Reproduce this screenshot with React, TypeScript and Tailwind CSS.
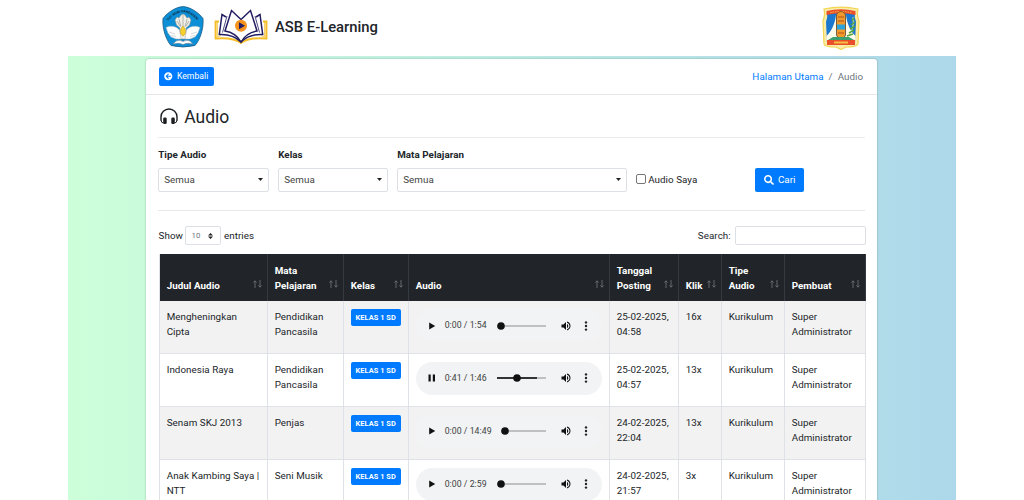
import React from "react";
import { FaArrowCircleLeft, FaSearch } from "react-icons/fa";

type Track = {
  title: string; subject: string; time: string; played: number; loaded: number;
  playing?: boolean; date: string; hour: string; clicks: string; trackWidth: number;
};

const tracks: Track[] = [
  { title: "Mengheningkan Cipta", subject: "Pendidikan Pancasila", time: "0:00 / 1:54", played: 4, loaded: 0, date: "25-02-2025,", hour: "04:58", clicks: "16x", trackWidth: 49 },
  { title: "Indonesia Raya", subject: "Pendidikan Pancasila", time: "0:41 / 1:46", played: 20, loaded: 40, playing: true, date: "25-02-2025,", hour: "04:57", clicks: "13x", trackWidth: 49 },
  { title: "Senam SKJ 2013", subject: "Penjas", time: "0:00 / 14:49", played: 4, loaded: 0, date: "24-02-2025,", hour: "22:04", clicks: "13x", trackWidth: 45 },
  { title: "Anak Kambing Saya | NTT", subject: "Seni Musik", time: "0:00 / 2:59", played: 4, loaded: 0, date: "24-02-2025,", hour: "21:57", clicks: "3x", trackWidth: 49 },
];

const columns = ["Judul Audio", "Mata Pelajaran", "Kelas", "Audio", "Tanggal Posting", "Klik", "Tipe Audio", "Pembuat"];

function Emblem() {
  return (
    <svg className="overflow-visible" width="42" height="42" viewBox="0 0 42 42">
      <path d="M21 .6C28 1 36 6 41 12.500C42 22 38 34 33 39.500Q21 42.500 9 39.500C4 34 0 22 1 12.500C6 6 14 1 21 .6Z" fill="#0c8fd6" stroke="#1d5c85" strokeWidth=".8" />
      <path id="motto" d="M5.500 16Q21 -3.500 36.500 16" fill="none" />
      <text fontFamily="Roboto, sans-serif" fontSize="3.300" letterSpacing="0" fontWeight="700" fill="#10283c"><textPath href="#motto" startOffset="3%">TUT WURI HANDAYANI</textPath></text>
      <path d="M13 14L15 11L17 12L19 9L21 8L23 9L25 12L27 11L29 14L27.500 19L24 22L25.500 33H16.500L18 22L14.500 19Z" fill="#f1f0e9" stroke="#85867f" strokeWidth=".5" />
      <path d="M17 13L19 21M21 9V20M25 13L23 21M15 15L18 20M27 15L24 20" stroke="#8a8a84" strokeWidth=".6" />
      <path d="M17.500 24C14 19.500 8 19.500 4 21.500L6 27L9 31L14 33L19 33ZM24.500 24C28 19.500 34 19.500 38 21.500L36 27L33 31L28 33L23 33Z" fill="#fff" stroke="#a2b1b9" strokeWidth=".5" />
      <path d="M7 26L13 28M9 29.500L14 30.500M35 26L29 28M33 29.500L28 30.500" stroke="#b8bfc2" strokeWidth=".6" />
      <path d="M21 20C24.500 24 24.500 28 21 30C17.500 28 17.500 24 21 20Z" fill="#f8d22c" stroke="#b18b17" strokeWidth=".5" />
      <path d="M11 38L14 35Q18 33.500 21 35.500Q24 33.500 28 35L31 38Q25 36.500 21 38.500Q17 36.500 11 38Z" fill="#fff" stroke="#777" strokeWidth=".5" />
    </svg>
  );
}

function BookLogo() {
  return (
    <svg width="54" height="36" viewBox="0 0 54 36">
      <g fill="none" strokeLinejoin="miter">
        <path d="M5 12.500H1.600V29.500C12 28.500 20 29 27 34C34 29 42 28.500 52.400 29.500V12.500H49" stroke="#f5bd27" strokeWidth="2" />
        <path d="M7 26.500L3.500 28V13M47 26.500L50.500 28V13" stroke="#f5bd27" strokeWidth=".7" />
        <g stroke="#221d63" strokeWidth="1.500">
          <path d="M12 8L8 5.500L5.300 25.500C14 25 21 27 27 33C33 27 40 25 48.700 25.500L46 5.500L42 8" />
          <path d="M27 10.500L17.500 1.500L11 22C18 23 23 26 27 33C31 26 36 23 43 22L36.500 1.500Z" />
        </g>
        <path d="M13 7L8.500 23.500M41 7L45.500 23.500" stroke="#221d63" strokeWidth=".8" />
      </g>
      <circle cx="27" cy="16.800" r="6" fill="#f6921e" />
      <path d="M25 13.300V20.300L31 16.800Z" fill="#221d63" />
    </svg>
  );
}

function Crest() {
  return (
    <svg width="38" height="44" viewBox="0 0 38 44">
      <path d="M2 3Q19 -.8 36 3Q34.500 9 37 15L36 38Q35 41 24 41L19 43.500L14 41Q3 41 2 38L1 15Q3.500 9 2 3Z" fill="#faedaa" stroke="#f2d651" strokeWidth="1.200" />
      <path d="M5 6Q19 2 33 6Q32 11 34 16L33 37H5L4 16Q6 11 5 6Z" fill="#1c78ce" />
      <path d="M4.500 5Q19 1.500 33.500 5V9Q19 5.500 4.500 9Z" fill="#e9502a" />
      <path d="M8 6.800Q19 4.200 30 6.800" fill="none" stroke="#f6bd43" strokeWidth="1" strokeDasharray="1.500 1" />
      <path d="M14 9C13 18 9 26 4.500 30V34H16L14 28ZM24 9C25 18 29 26 33.500 30V34H22L24 28Z" fill="#fffbea" />
      <path d="M24 32Q33 25 31 11" stroke="#d9e8a9" strokeWidth="1" fill="none" />
      <path d="M25 30L31 28M27 27L32 24M28 23L33 20M29 19L33 16M30 15L32 12" stroke="#55a443" strokeWidth="1.500" fill="none" />
      <rect x="14.500" y="5.500" width="9" height="27" rx="4.500" fill="#f09a2d" stroke="#795028" strokeWidth=".8" />
      <path d="M16 11h6M16 15h6M16 27h6" stroke="#b0501d" strokeWidth="1" />
      <rect x="15" y="18.500" width="8" height="5" fill="#2ba4dc" />
      <path d="M6 34L11 31H27L32 34Z" fill="#3c9f70" />
      <path d="M5 34H33V39H5Z" fill="#e9502a" />
      <path d="M12 36.500H26" stroke="#f6bd43" strokeWidth="2" />
    </svg>
  );
}

function HeadphonesIcon() {
  return (
    <svg width="18" height="18" viewBox="0 0 18 18">
      <path d="M1 12.500V9A8 8 0 0 1 17 9V12.500" fill="none" stroke="#1b1e21" strokeWidth="1.400" />
      <rect x="3.200" y="9.500" width="3.500" height="6.500" rx="1.300" fill="#1b1e21" />
      <rect x="11.300" y="9.500" width="3.500" height="6.500" rx="1.300" fill="#1b1e21" />
      <path d="M1 12Q1.200 15 3.500 15M17 12Q16.800 15 14.500 15" fill="none" stroke="#1b1e21" strokeWidth="1" />
    </svg>
  );
}

function SelectBox({ width, label }: { width: string; label: string }) {
  return (
    <div className={width}>
      <div className="h-[21px] font-bold">{label}</div>
      <div className="flex h-[24px] items-center justify-between rounded-[2px] border border-[#dce0e4] pr-[5px] pb-[1px] pl-[5px] text-[#444]">
        <span>Semua</span>
        <svg width="5" height="3" viewBox="0 0 5 3"><path d="M0 0H5L2.500 3Z" fill="#222" /></svg>
      </div>
    </div>
  );
}

function SortArrows() {
  return (
    <svg className="mb-[5px] shrink-0" width="9" height="8" viewBox="0 0 9 8" fill="none" stroke="#6b7075" strokeWidth=".9">
      <path d="M2 8V.8M.4 2.600L2 .8L3.600 2.600M7 0V7.200M5.400 5.400L7 7.200L8.600 5.400" />
    </svg>
  );
}

function Player({ track }: { track: Track }) {
  return (
    <div className="flex h-[33px] w-[186px] items-center rounded-full bg-[#f1f3f4] pl-[12px]">
      <svg width="8" height="8" viewBox="0 0 8 8" fill="#111">
        {track.playing ? <path d="M.5 .5H2.700V7.500H.5ZM4.800 .5H7V7.500H4.800Z" /> : <path d="M1.200 .6V7.400L7.200 4Z" />}
      </svg>
      <span className="ml-[9px] flex-1 text-[8.700px] whitespace-nowrap text-[#3d3f41]">{track.time}</span>
      <svg width={track.trackWidth} height="8" viewBox={`0 0 ${track.trackWidth} 8`}>
        <path d={`M0 4H${track.trackWidth}`} stroke="#bfc0c1" strokeWidth="2" />
        <path d={`M0 4H${track.loaded}`} stroke="#333" strokeWidth="2" />
        <circle cx={track.played} cy="4" r="3.800" fill="#111" />
      </svg>
      <svg className="ml-[14px]" width="12" height="12" viewBox="0 0 24 24" fill="#111">
        <path d="M3 9v6h4l5 5V4L7 9H3zm13.500 3c0-1.770-1.020-3.290-2.500-4.030v8.050c1.480-.73 2.500-2.250 2.500-4.020zM14 3.230v2.060c2.890.86 5 3.540 5 6.710s-2.110 5.850-5 6.710v2.060c4.010-.91 7-4.490 7-8.770s-2.990-7.860-7-8.770z" />
      </svg>
      <svg className="mr-[10px] ml-[8px]" width="12" height="12" viewBox="0 0 12 12" fill="#222">
        <circle cx="6" cy="2.400" r="1.200" /><circle cx="6" cy="6" r="1.200" /><circle cx="6" cy="9.600" r="1.200" />
      </svg>
    </div>
  );
}

export default function App() {
  return (
    <div className="h-[500px] overflow-hidden bg-white font-['Roboto',sans-serif] text-[9.800px] leading-[15px] tracking-[0.050px] text-[#212529]">
      <header className="flex h-[56px] items-center pr-[164px] pb-[2px] pl-[162px]">
        <Emblem />
        <div className="ml-[10px]"><BookLogo /></div>
        <h1 className="ml-[7px] flex-1 text-[14.800px] font-medium tracking-normal">ASB E-Learning</h1>
        <div className="pt-[2px]"><Crest /></div>
      </header>
      <main className="mx-[68px] h-[444px] bg-linear-to-r from-[#ccffd9] to-[#add8eb] pt-[3px] pl-[78.200px]">
        <section className="h-[460px] w-[731px] rounded-t-[3px] bg-white shadow-[0_0_2px_rgba(0,0,0,0.3)]">
          <div className="flex h-[35.500px] items-center justify-between border-b border-[#e4e6e8] pr-[14px] pl-[12.400px]">
            <button className="flex h-[19px] w-[55.500px] items-center justify-center gap-[4px] rounded-[2px] bg-[#007bff] text-[8.600px] text-white"><FaArrowCircleLeft size={8.500} />Kembali</button>
            <nav className="flex gap-[5px] pt-[1px] text-[#6c757d]"><a className="text-[#007bff]">Halaman Utama</a><span>/</span><span>Audio</span></nav>
          </div>
          <div className="px-[12px]">
            <div className="flex h-[43.500px] items-center gap-[6px] border-b border-[#ececec] pt-[3px] pl-[2px]">
              <HeadphonesIcon /><h2 className="text-[17.500px] leading-[18px] tracking-normal">Audio</h2>
            </div>
            <div className="flex h-[73px] gap-[9px] border-b border-[#e8e8e8] pt-[9px]">
              <SelectBox width="w-[111px]" label="Tipe Audio" />
              <SelectBox width="w-[110px]" label="Kelas" />
              <SelectBox width="w-[230px]" label="Mata Pelajaran" />
              <label className="mt-[20px] flex h-[24px] w-[110px] items-center gap-[2px]"><span className="h-[10px] w-[10px] rounded-[2px] border border-[#767676]" />Audio Saya</label>
              <button className="mt-[21px] flex h-[24px] w-[49px] items-center justify-center gap-[4px] rounded-[2px] bg-[#007bff] pb-[1px] text-white"><FaSearch size={10} />Cari</button>
            </div>
            <div className="flex h-[43px] items-center justify-between pt-[6px]">
              <div className="ml-[0.400px] flex items-center gap-[2.500px]">Show
                <span className="flex h-[19px] w-[36px] items-center justify-between rounded-[2px] border border-[#dce0e4] px-[5px] text-[7.800px] text-[#6c757d]">10<svg className="mr-[2px]" width="5" height="6" viewBox="0 0 5 6" fill="#222"><path d="M0 2.500L2.500 0L5 2.500ZM0 3.500H5L2.500 6Z" /></svg></span>
                entries
              </div>
              <div className="-mr-[0.500px] flex items-center gap-[4px]">Search:<span className="h-[19px] w-[131px] rounded-[2px] border border-[#dce0e4]" /></div>
            </div>
            <table className="ml-[0.500px] w-[707px] table-fixed border-separate border-spacing-0 border-l border-[#dee2e6]">
              <colgroup><col className="w-[108px]" /><col className="w-[76px]" /><col className="w-[65px]" /><col className="w-[201px]" /><col className="w-[69px]" /><col className="w-[43px]" /><col className="w-[63px]" /><col className="w-[81px]" /></colgroup>
              <thead>
                <tr className="h-[47px] bg-[#212529] text-left align-bottom text-white">
                  {columns.map((name) => (
                    <th key={name} className="border-r border-[#343a40] pr-[5px] pb-[8px] pl-[7px] align-bottom font-bold">
                      <div className="flex items-end justify-between"><span>{name.includes("Mata") || name.includes("Tanggal") || name.includes("Tipe") ? name.split(" ").map((word) => <span key={word} className="block">{word}</span>) : name}</span><SortArrows /></div>
                    </th>
                  ))}
                </tr>
              </thead>
              <tbody className="[&_td]:border-r [&_td]:border-b [&_td]:border-[#dee2e6] [&_td]:pt-[8px] [&_td]:pl-[7px] [&_td]:align-top">
                {tracks.map((track) => (
                  <tr key={track.title} className="h-[52.900px] odd:bg-[#f2f2f2]">
                    <td className="pr-[6px]">{track.title}</td><td className="pr-[7px]">{track.subject}</td>
                    <td><span className="flex h-[17px] w-[50px] items-center justify-center rounded-[2px] bg-[#007bff] text-[7.400px] font-bold whitespace-nowrap text-white">KELAS 1 SD</span></td>
                    <td><Player track={track} /></td>
                    <td>{track.date}<br />{track.hour}</td><td>{track.clicks}</td><td>Kurikulum</td><td>Super Administrator</td>
                  </tr>
                ))}
              </tbody>
            </table>
          </div>
        </section>
      </main>
    </div>
  );
}
